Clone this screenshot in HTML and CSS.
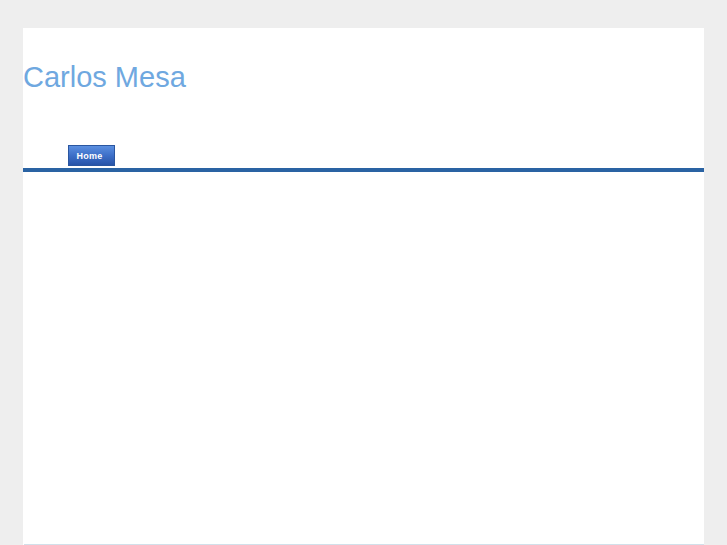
FILE: index.html
```html
<!DOCTYPE html>
<html>
<head>
<meta charset="utf-8">
<title>Carlos Mesa</title>
<link rel="stylesheet" href="styles.css">
</head>
<body>
<div class="page">
  <header class="header">
    <h1 class="site-title">Carlos Mesa</h1>
    <nav class="nav">
      <a class="nav-item" href="#">Home</a>
    </nav>
  </header>
  <main class="content"></main>
  <div class="footer-line"></div>
</div>
</body>
</html>
```

FILE: styles.css
```css
html, body {
  margin: 0;
  padding: 0;
  background: #eeeeee;
  height: 100%;
  overflow: hidden;
}
.page {
  margin: 28px 0 0 23px;
  width: 681px;
  height: 517px;
  background: #ffffff;
  display: flex;
  flex-direction: column;
}
.header {
  display: flex;
  flex-direction: column;
}
.site-title {
  margin: 0;
  padding-top: 32px;
  font-family: "Liberation Sans", Arial, sans-serif;
  font-weight: normal;
  font-size: 29px;
  line-height: 34px;
  color: #6fa8e0;
}
.nav {
  display: flex;
  margin-top: 51px;
  padding-left: 45px;
  border-bottom: 4px solid #2a63a3;
  height: 21px;
  padding-bottom: 2px;
}
.nav-item {
  display: flex;
  align-items: center;
  justify-content: center;
  box-sizing: border-box;
  width: 47px;
  height: 21px;
  padding-right: 4px;
  padding-top: 1px;
  border: 1px solid #2a56a0;
  background: linear-gradient(to bottom, #5b8fe0 0%, #3d6fc8 50%, #2854a8 100%);
  color: #ffffff;
  font-family: "Liberation Sans", Arial, sans-serif;
  font-weight: bold;
  font-size: 9px;
  text-decoration: none;
  letter-spacing: 0.3px;
}
.content {
  flex: 1;
}
.footer-line {
  height: 1px;
  margin-left: 1px;
  background: #d2e0ea;
}
```
